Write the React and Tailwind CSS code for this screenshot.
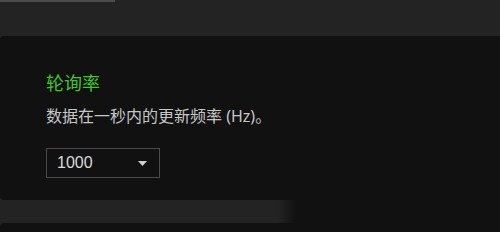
import React from 'react';

const font = { fontFamily: '"Noto Sans", "Noto Sans CJK SC", sans-serif' };

const PollingRate = () => {
  return (
    <div className="h-[232px] w-[500px] overflow-hidden bg-[#232323]" style={font}>
      <div className="h-[2px] w-[115px] bg-[#4c4c4c]" />

      <section className="mt-[34px] h-[164px] rounded-l-[4px] bg-[#111111] px-[46px] pt-[35px]">
        <h2 className="text-[18px] leading-[24px] text-[#44c42c]">轮询率</h2>
        <p className="mt-[10px] text-[16px] leading-[22px] text-[#c6c6c6]">
          数据在一秒内的更新频率 (Hz)。
        </p>

        <button className="mt-[21px] flex h-[30px] w-[114px] items-center justify-between border border-[#4a4a4a] pl-[10px] pr-[12px] text-[16px] text-[#dadada]">
          <span style={{ fontFamily: '"Liberation Sans", sans-serif' }}>1000</span>
          <svg width="9" height="5" viewBox="0 0 9 5" className="text-[#d0d0d0]">
            <path d="M0 0h9L4.5 5z" fill="currentColor" />
          </svg>
        </button>
      </section>

      <div className="flex h-[23px]">
        <div className="w-[278px]" />
        <div className="w-[18px] bg-gradient-to-r from-transparent to-[#111111]" />
        <div className="flex-1 bg-[#111111]" />
      </div>

      <div className="h-[20px] rounded-tl-[4px] bg-[#111111]" />
    </div>
  );
};

export default function App() {
  return <PollingRate />;
}
